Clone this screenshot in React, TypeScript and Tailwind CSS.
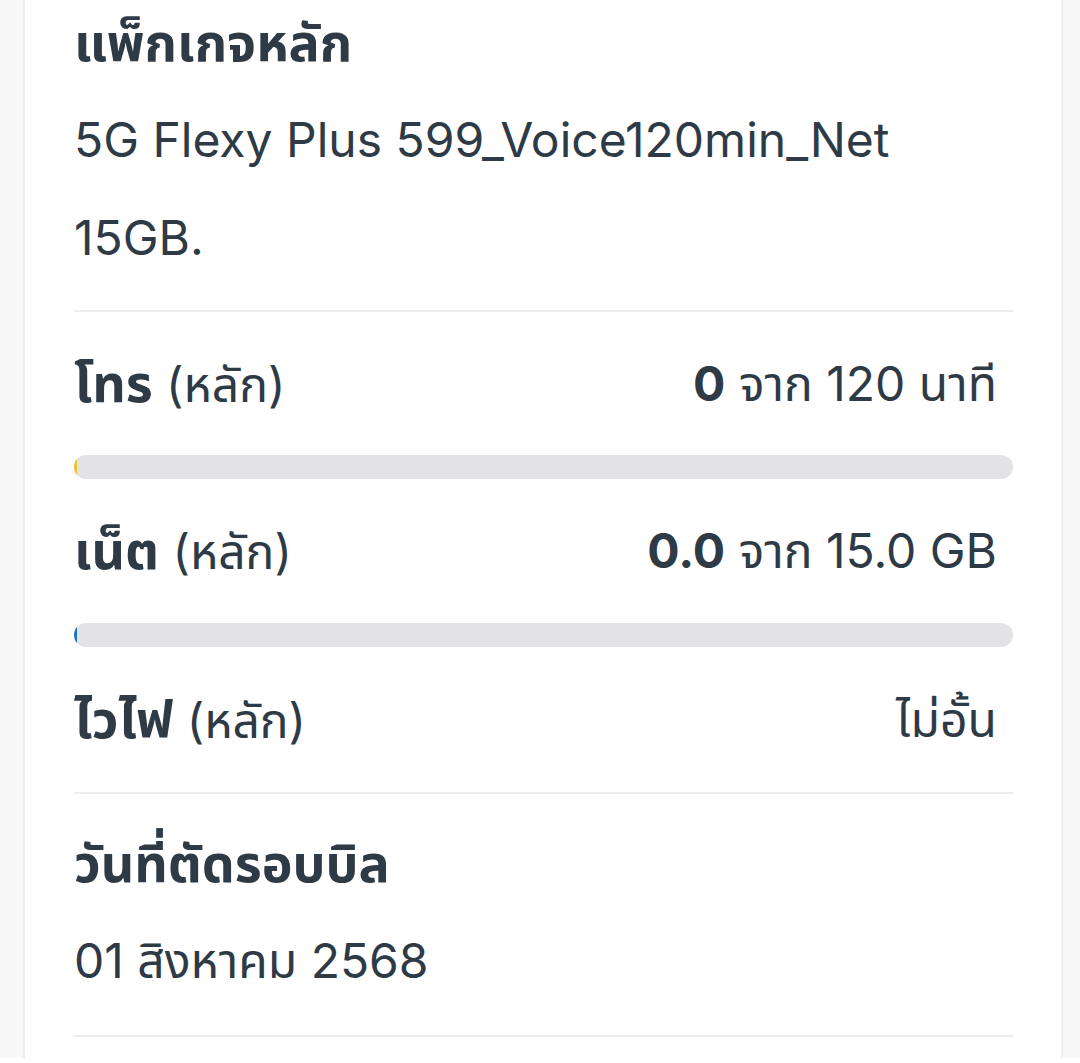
const font = "font-['Inter','Noto_Sans','Noto_Sans_Thai',sans-serif]";

function UsageRow({ label, used, total, h }: { label: string; used: string; total: string; h: string }) {
  return (
    <div className={`flex ${h} items-center justify-between pr-4`}>
      <span>
        <span className="text-[52px] font-bold">{label}</span> (หลัก)
      </span>
      <span>
        <span className="font-bold">{used}</span> {total}
      </span>
    </div>
  );
}

function Bar({ tip }: { tip: string }) {
  return (
    <div className="relative h-6 overflow-hidden rounded-full bg-[#e3e3e6]">
      <div className={`absolute left-0 top-0 h-full w-[3px] ${tip}`} />
    </div>
  );
}

export default function App() {
  return (
    <div className={`min-h-screen bg-[#f7f7f8] pl-[23px] pr-[17px] ${font} text-[48px] text-[#2e3a45]`}>
      <div className="min-h-screen border-x-2 border-[#ececee] bg-white pl-[49px] pr-[48px]">
        {/* Package */}
        <div className="border-b-2 border-[#ececec] pb-[23px]">
          <h2 className="-mt-[5px] text-[52px] font-bold leading-[96px]">แพ็กเกจหลัก</h2>
          <p className="leading-[98px]">5G Flexy Plus 599_Voice120min_Net 15GB.</p>
        </div>

        {/* Usage */}
        <div className="border-b-2 border-[#ececec]">
          <UsageRow h="h-[143px]" label="โทร" used="0" total="จาก 120 นาที" />
          <Bar tip="bg-[#f2c12e]" />
          <UsageRow h="h-[144px]" label="เน็ต" used="0.0" total="จาก 15.0 GB" />
          <Bar tip="bg-[#1f74c4]" />
          <div className="flex h-[145px] items-center justify-between pr-4">
            <span>
              <span className="text-[52px] font-bold">ไวไฟ</span> (หลัก)
            </span>
            <span>ไม่อั้น</span>
          </div>
        </div>

        {/* Bill cycle */}
        <div className="border-b-2 border-[#ececec] pb-[25px] pt-[22px]">
          <h2 className="text-[52px] font-bold leading-[96px]">วันที่ตัดรอบบิล</h2>
          <p className="leading-[98px]">01 สิงหาคม 2568</p>
        </div>
      </div>
    </div>
  );
}
